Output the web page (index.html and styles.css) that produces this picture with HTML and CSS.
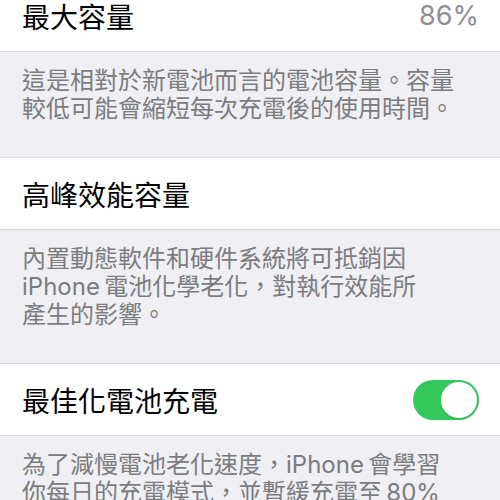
FILE: index.html
```html
<!DOCTYPE html>
<html lang="zh-Hant">
<head>
    <meta charset="UTF-8">
    <meta name="viewport" content="width=device-width, initial-scale=1.0">
    <title>電池健康度</title>
    <link rel="stylesheet" href="styles.css">
</head>
<body>

<main class="settings">
    <div class="cell">
        <span class="cell-title">最大容量</span>
        <span class="cell-value">86%</span>
    </div>
    <p class="footnote">這是相對於新電池而言的電池容量。容量<br>較低可能會縮短每次充電後的使用時間。</p>

    <div class="cell">
        <span class="cell-title">高峰效能容量</span>
    </div>
    <p class="footnote">內置動態軟件和硬件系統將可抵銷因<br>iPhone&thinsp;電池化學老化，對執行效能所<br>產生的影響。</p>

    <div class="cell">
        <span class="cell-title">最佳化電池充電</span>
        <span class="switch on"><span class="knob"></span></span>
    </div>
    <p class="footnote">為了減慢電池老化速度，iPhone&thinsp;會學習<br>你每日的充電模式，並暫緩充電至&thinsp;80%</p>
</main>

</body>
</html>
```

FILE: styles.css
```css
body { margin: 0; background-color: #efeff4; font-family: "Inter", "Noto Sans CJK TC", sans-serif; overflow: hidden; }

/* the list is scrolled a little, so the first row is cut off at the top */
.settings { margin-top: -21px; }

.cell {
    display: flex;
    align-items: center;
    justify-content: space-between;
    height: 73px;
    padding: 0 21px 0 22px;
    background-color: #fff;
    border-top: 1px solid #dcdce0;
    border-bottom: 1px solid #dcdce0;
    box-sizing: border-box;
}
.cell-title { font-size: 28px; color: #000; }
.cell-value { font-size: 27px; color: #8e8e93; }

.footnote {
    margin: 0;
    padding: 15px 22px 34px;
    font-size: 24px;
    line-height: 28px;
    color: #7c7c80;
}

/* toggle switch */
.switch {
    display: flex;
    align-items: center;
    width: 66px;
    height: 40px;
    padding: 2px;
    border-radius: 20px;
    background-color: #e5e5ea;
    box-sizing: border-box;
}
.switch.on { background-color: #34c759; justify-content: flex-end; }
.knob {
    width: 36px;
    height: 36px;
    border-radius: 50%;
    background-color: #fff;
    box-shadow: 0 1px 3px rgba(0, 0, 0, 0.12);
}
```
